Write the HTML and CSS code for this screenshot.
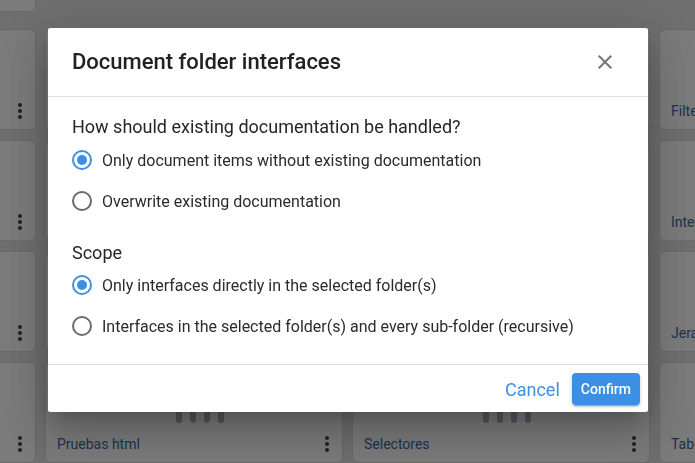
FILE: index.html
```html
<!DOCTYPE html>
<html lang="en">
<head>
    <meta charset="UTF-8">
    <title>Interfaces</title>
    <link rel="stylesheet" href="styles.css">
</head>
<body>
    <div class="page">
        <div class="top-row">
            <div class="search-box"></div>
        </div>

        <div class="grid">
            <div class="card"><div class="thumb"></div><div class="card-foot"><span class="card-title"></span><span class="dots"><i></i><i></i><i></i></span></div></div>
            <div class="card"><div class="thumb"></div><div class="card-foot"><span class="card-title"></span><span class="dots"><i></i><i></i><i></i></span></div></div>
            <div class="card"><div class="thumb"></div><div class="card-foot"><span class="card-title"></span><span class="dots"><i></i><i></i><i></i></span></div></div>
            <div class="card"><div class="thumb"></div><div class="card-foot"><span class="card-title">Filters</span><span class="dots"><i></i><i></i><i></i></span></div></div>

            <div class="card"><div class="thumb"></div><div class="card-foot"><span class="card-title"></span><span class="dots"><i></i><i></i><i></i></span></div></div>
            <div class="card"><div class="thumb"></div><div class="card-foot"><span class="card-title"></span><span class="dots"><i></i><i></i><i></i></span></div></div>
            <div class="card"><div class="thumb"></div><div class="card-foot"><span class="card-title"></span><span class="dots"><i></i><i></i><i></i></span></div></div>
            <div class="card"><div class="thumb"></div><div class="card-foot"><span class="card-title">Interfaces</span><span class="dots"><i></i><i></i><i></i></span></div></div>

            <div class="card"><div class="thumb"></div><div class="card-foot"><span class="card-title"></span><span class="dots"><i></i><i></i><i></i></span></div></div>
            <div class="card"><div class="thumb"></div><div class="card-foot"><span class="card-title"></span><span class="dots"><i></i><i></i><i></i></span></div></div>
            <div class="card"><div class="thumb"></div><div class="card-foot"><span class="card-title"></span><span class="dots"><i></i><i></i><i></i></span></div></div>
            <div class="card"><div class="thumb"></div><div class="card-foot"><span class="card-title">Jerarquías</span><span class="dots"><i></i><i></i><i></i></span></div></div>

            <div class="card"><div class="thumb"></div><div class="card-foot"><span class="card-title"></span><span class="dots"><i></i><i></i><i></i></span></div></div>
            <div class="card"><div class="thumb"><span class="bars"><i></i><i></i><i></i><i></i></span></div><div class="card-foot"><span class="card-title">Pruebas html</span><span class="dots"><i></i><i></i><i></i></span></div></div>
            <div class="card"><div class="thumb"><span class="bars"><i></i><i></i><i></i><i></i></span></div><div class="card-foot"><span class="card-title">Selectores</span><span class="dots"><i></i><i></i><i></i></span></div></div>
            <div class="card"><div class="thumb"></div><div class="card-foot"><span class="card-title">Tablas</span><span class="dots"><i></i><i></i><i></i></span></div></div>
        </div>
    </div>

    <div class="overlay"></div>

    <div class="dialog">
        <div class="dialog-header">
            <h1>Document folder interfaces</h1>
            <button class="close" type="button">
                <svg width="24" height="24" viewBox="0 0 24 24"><path d="M19 6.41L17.59 5 12 10.59 6.41 5 5 6.41 10.59 12 5 17.59 6.41 19 12 13.41 17.59 19 19 17.59 13.41 12z" fill="#757575"/></svg>
            </button>
        </div>

        <div class="dialog-body">
            <h2>How should existing documentation be handled?</h2>
            <label class="radio checked">
                <svg width="20" height="20" viewBox="0 0 20 20"><circle cx="10" cy="10" r="9" fill="none" stroke="#3b8fe4" stroke-width="2"/><circle cx="10" cy="10" r="5" fill="#3b8fe4"/></svg>
                Only document items without existing documentation
            </label>
            <label class="radio">
                <svg width="20" height="20" viewBox="0 0 20 20"><circle cx="10" cy="10" r="9" fill="none" stroke="#6b6b6b" stroke-width="2"/></svg>
                Overwrite existing documentation
            </label>

            <h2 class="scope">Scope</h2>
            <label class="radio checked">
                <svg width="20" height="20" viewBox="0 0 20 20"><circle cx="10" cy="10" r="9" fill="none" stroke="#3b8fe4" stroke-width="2"/><circle cx="10" cy="10" r="5" fill="#3b8fe4"/></svg>
                Only interfaces directly in the selected folder(s)
            </label>
            <label class="radio">
                <svg width="20" height="20" viewBox="0 0 20 20"><circle cx="10" cy="10" r="9" fill="none" stroke="#6b6b6b" stroke-width="2"/></svg>
                Interfaces in the selected folder(s) and every sub-folder (recursive)
            </label>
        </div>

        <div class="dialog-footer">
            <button class="btn-text" type="button">Cancel</button>
            <button class="btn-primary" type="button">Confirm</button>
        </div>
    </div>
</body>
</html>
```

FILE: styles.css
```css
body {
    margin: 0;
    font-family: Roboto, "Liberation Sans", sans-serif;
    background-color: #e1e1e1;
    overflow: hidden;
    height: 463px;
}
.page {
    margin-left: -262px;
}
.top-row {
    margin-top: -28px;
    height: 40px;
    margin-bottom: 17px;
}
.search-box {
    width: 296px;
    height: 38px;
    background: white;
    border: 1px solid #d4d4d4;
    border-radius: 6px;
}
.grid {
    display: grid;
    grid-template-columns: repeat(4, 298px);
    grid-auto-rows: 101px;
    column-gap: 9px;
    row-gap: 10px;
}
.card {
    background: white;
    border: 1px solid #d4d4d4;
    border-radius: 6px;
    display: flex;
    flex-direction: column;
    box-sizing: border-box;
}
.thumb {
    flex: 1;
    display: flex;
    justify-content: center;
    align-items: flex-end;
    padding-bottom: 2px;
}
.bars {
    display: flex;
    gap: 8px;
    margin-left: 11px;
}
.bars i {
    width: 6px;
    height: 16px;
    border-radius: 3px;
    background: #9aadc2;
}
.card-foot {
    height: 37px;
    display: flex;
    align-items: center;
    justify-content: space-between;
    padding: 0 13px 0 11px;
}
.card-title {
    font-size: 14px;
    color: #104c96;
}
.dots {
    display: flex;
    flex-direction: column;
    gap: 2px;
}
.dots i {
    width: 4px;
    height: 4px;
    border-radius: 50%;
    background: #222;
}
.overlay {
    position: fixed;
    inset: 0;
    background: rgba(33, 33, 33, 0.595);
}
.dialog {
    position: fixed;
    left: 48px;
    top: 28px;
    width: 600px;
    background: white;
    border-radius: 2px;
    box-shadow: 0 11px 15px -7px rgba(0, 0, 0, 0.2), 0 24px 38px 3px rgba(0, 0, 0, 0.14), 0 9px 46px 8px rgba(0, 0, 0, 0.12);
}
.dialog-header {
    display: flex;
    align-items: center;
    justify-content: space-between;
    padding: 18px 31px 18px 24px;
    border-bottom: 1px solid #e0e0e0;
}
.dialog-header h1 {
    margin: 0;
    font-size: 22px;
    font-weight: 500;
    line-height: 32px;
    color: #212121;
}
.close {
    border: none;
    background: none;
    padding: 0;
    width: 24px;
    height: 24px;
    cursor: pointer;
}
.dialog-body {
    padding: 18px 24px 26px;
    border-bottom: 1px solid #e0e0e0;
}
.dialog-body h2 {
    margin: 0 0 9px;
    font-size: 18px;
    font-weight: 400;
    line-height: 24px;
    color: #262626;
}
.dialog-body h2.scope {
    margin-top: 28px;
    margin-bottom: 8px;
}
.radio {
    display: flex;
    align-items: center;
    gap: 10px;
    height: 24px;
    font-size: 16px;
    color: #2b2b2b;
    cursor: pointer;
}
.radio + .radio {
    margin-top: 17px;
}
.dialog-footer {
    display: flex;
    justify-content: flex-end;
    align-items: center;
    gap: 6px;
    padding: 8px 8px 7px;
}
.btn-text {
    height: 32px;
    padding: 0 6px;
    border: none;
    background: none;
    font-family: inherit;
    font-size: 18px;
    color: #3b8fe4;
    cursor: pointer;
}
.btn-primary {
    height: 32px;
    padding: 0 9px;
    border: none;
    border-radius: 4px;
    background: #3b8fe4;
    color: white;
    font-family: inherit;
    font-size: 14px;
    font-weight: 500;
    cursor: pointer;
    box-shadow: 0 3px 1px -2px rgba(0, 0, 0, 0.2), 0 2px 2px 0 rgba(0, 0, 0, 0.14), 0 1px 5px 0 rgba(0, 0, 0, 0.12);
}
```
